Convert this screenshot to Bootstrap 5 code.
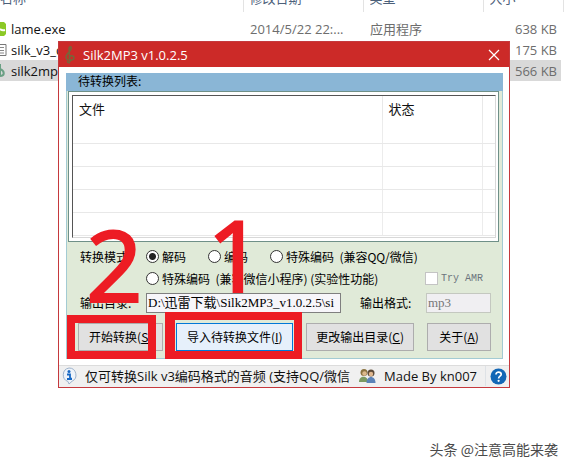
<!DOCTYPE html>
<html lang="zh-CN">
<head>
<meta charset="utf-8">
<meta name="viewport" content="width=device-width, initial-scale=1">
<title>Silk2MP3 v1.0.2.5</title>
<link href="https://cdn.jsdelivr.net/npm/bootstrap@5.3.0/dist/css/bootstrap.min.css" rel="stylesheet">
<style>
body { font-family: "Open Sans", "Noto Sans CJK SC", sans-serif; font-size: 13px; line-height: 20px; color: #111; background: #fff; min-height: 100vh; overflow: hidden; }
.files { table-layout: fixed; width: calc(100% - 6px); color: #6d6d6d; white-space: nowrap; }
.files th { padding: 0 6px; font-weight: 400; color: #4c607a; border-right: 1px solid #e3e3e3; }
.files thead div { height: 12px; overflow: hidden; display: flex; align-items: flex-end; }
.files thead span { margin-bottom: 4px; }
.files td { height: 21px; padding: 0 7px; overflow: hidden; }
.files td:first-child { color: #111; padding-left: 0; }
.files td:last-child { border-right: 4px solid #fff; padding-right: 4px; text-align: right; }
.files .spacer-row td { height: 6px; }
.files .picked td { background: #d9d9d9; }
.files svg { margin-right: 4px; margin-top: -2px; }
.c-mid { width: 120px; }
.c-size { width: 80px; }
.dialog-win { left: 58px; right: 61px; top: 41px; border: 1px solid #c5393d; background: #fff; }
.title-strip { background: #cc2a28; color: #fff; height: 25px; padding: 0 9px 0 6px; }
.title-strip button { background: none; border: 0; padding: 0; line-height: 0; }
.tool-panel { margin: 6px 6px 6px 7px; border: 1px solid #a3cbd3; border-top: 0; background: #e0ead8; padding-bottom: 7px; }
.panel-name { background: #8ab6d6; height: 18px; line-height: 16px; padding-left: 12px; margin: 0 -1px; }
.sim { font-family: "Noto Sans CJK SC", sans-serif; font-size: 12px; color: #000; }
.list-outer { border: 1px solid #6f9088; background: #fff; margin: 0 3px 0 1px; padding: 3px 2px 3px 3px; }
.list-inner { border: 1px solid #d8d8d8; border-top-color: #555; border-left-color: #555; padding-bottom: 1px; }
.list-inner table { table-layout: fixed; width: 100%; }
.list-inner th { height: 24px; font-weight: 400; padding: 1px 6px 0; border-right: 1px solid #e8e8e8; }
.list-inner td { height: 23px; border-right: 1px solid #ececec; border-bottom: 1px solid #e8e8e8; }
.list-inner th:last-child, .list-inner td:last-child { border-right: 0; }
.opt-area { padding: 4px 11px 0 13px; }
.opt-line { height: 22px; white-space: nowrap; }
.modes { gap: 22px; }
.lead-label { width: 66px; flex: none; white-space: nowrap; }
.opt-line input { appearance: none; width: 13px; height: 13px; border: 1px solid #333; background: #fff; margin: 0 3px 0 0; flex: none; }
.opt-line input[type=radio] { border-radius: 50%; }
.opt-line input[type=radio]:checked { background: radial-gradient(circle, #222 0 3px, #fff 4px); }
.opt-line input[type=checkbox] { border-color: #c4c4c4; margin-right: 3px; }
.half { font-family: "Liberation Mono", monospace; font-size: 10px; }
.path-line { margin-top: 3px; }
.box-text { height: 20px; border: 1px solid #7f7f7f; background: #f7f6fa; padding: 0 1px; min-width: 0; border-radius: 0; font-family: "Liberation Serif", "Noto Sans CJK SC", serif; font-size: 13px; color: #000; }
.box-text:disabled { border-color: #c4c8c0; background: #f0eff2; color: #777; }
.fmt { width: 65px; }
.fmt-label { margin-left: 19px; }
.cmds { padding: 0 11px; gap: 13px; margin-top: 10px; }
.cmds button { height: 28px; padding: 0; min-width: 0; border: 1px solid #adadad; background: #e1e1e1; white-space: nowrap; overflow: hidden; }
.cmds .focused { border: 1px solid #0078d7; background: #e6f0fb; }
.w-a { flex: 85 1 0; } .w-b { flex: 117 1 0; } .w-c { flex: 108 1 0; } .w-d { flex: 63 1 0; }
.status-strip { background: #f0f0f0; border-top: 1px solid #dcdcdc; height: 22px; white-space: nowrap; padding: 0 2px 0 1px; }
.status-strip svg { flex: none; }
.status-msg { min-width: 0; padding-left: 7px; overflow: hidden; }
.mark-digit { color: #ed1c24; font-family: "Noto Sans", sans-serif; font-size: 99px; line-height: 100px; -webkit-text-stroke: 2px #ed1c24; }
.digit-two { left: 27px; top: 172px; }
.digit-one { left: 148px; top: 162px; }
.mark-frame { border: 8px solid #ed1c24; pointer-events: none; }
.frame-two { left: 8px; top: 273px; width: 89px; height: 44px; }
.frame-one { left: 106px; top: 270px; width: 137px; height: 47px; border-left-width: 10px; }
.credit { right: 13px; bottom: 11px; font-family: "Noto Sans CJK SC", sans-serif; font-size: 14px; color: #4a4a4a; }
</style>
</head>
<body class="position-relative">
<table class="files">
  <colgroup><col><col class="c-mid"><col class="c-mid"><col class="c-size"></colgroup>
  <thead><tr>
    <th class="ps-0"><div><span>名称</span></div></th><th><div><span>修改日期</span></div></th><th><div><span>类型</span></div></th><th><div><span>大小</span></div></th>
  </tr></thead>
  <tbody>
    <tr class="spacer-row"><td colspan="4"></td></tr>
    <tr><td><svg width="7" height="16" viewBox="0 0 7 16"><path d="M0 1h4l2 2v10l-2 2H0z" fill="#8cc926"/><path d="M0 8q2 2 5 1" stroke="#fff" fill="none" stroke-width="2"/></svg>lame.exe</td><td>2014/5/22 22:...</td><td>应用程序</td><td>638 KB</td></tr>
    <tr><td><svg width="7" height="16" viewBox="0 0 7 16"><path d="M0 2.500h6v11H0" fill="#fff" stroke="#777"/><path d="M0 5.500h4M0 8.500h4M0 11h4" stroke="#888"/></svg>silk_v3_d</td><td></td><td></td><td>175 KB</td></tr>
    <tr class="picked"><td><svg width="7" height="16" viewBox="0 0 7 16"><path d="M0 1v13M0 6c5 2 5 7 0 7" fill="none" stroke="#6aa084" stroke-width="2"/></svg>silk2mp3</td><td></td><td></td><td>566 KB</td></tr>
  </tbody>
</table>

<main class="dialog-win position-absolute">
  <header class="title-strip d-flex align-items-center">
    <svg width="10" height="18" viewBox="0 0 10 18"><path d="M5 16.500c-2 1-3-1-2-1.500M5 16 4 3c0-3 3-3 2 0-1 3-5 5-5 8 0 4 8 4 8 1 0-3-5-3-5 0" fill="none" stroke="#75673a" stroke-width="1.500"/></svg>
    <span class="ms-2">Silk2MP3 v1.0.2.5</span>
    <button class="ms-auto" type="button" aria-label="关闭"><svg width="12" height="12" viewBox="0 0 12 12"><path d="m1 1 10 10M11 1 1 11" stroke="#fff" stroke-width="1.200"/></svg></button>
  </header>

  <section class="tool-panel">
    <div class="panel-name sim">待转换列表:</div>
    <div class="list-outer"><div class="list-inner">
      <table>
        <colgroup><col><col style="width:100px"><col style="width:13px"></colgroup>
        <thead><tr><th>文件</th><th>状态</th><th></th></tr></thead>
        <tbody>
          <tr><td></td><td></td><td></td></tr><tr><td></td><td></td><td></td></tr><tr><td></td><td></td><td></td></tr><tr><td></td><td></td><td></td></tr><tr><td></td><td></td><td></td></tr>
        </tbody>
      </table>
    </div></div>
    <form class="sim">
      <div class="opt-area">
        <div class="opt-line d-flex align-items-center">
          <span class="lead-label">转换模式:</span>
          <div class="modes d-flex">
            <label class="d-flex align-items-center"><input type="radio" name="mode" checked>解码</label>
            <label class="d-flex align-items-center"><input type="radio" name="mode">编码</label>
            <label class="d-flex align-items-center"><input type="radio" name="mode">特殊编码&nbsp; (兼容QQ/微信)</label>
          </div>
        </div>
        <div class="opt-line d-flex align-items-center">
          <span class="lead-label"></span>
          <label class="d-flex align-items-center"><input type="radio" name="mode">特殊编码&nbsp; (兼容微信小程序) (实验性功能)</label>
          <label class="d-flex align-items-center ms-auto text-secondary pe-2"><input type="checkbox" disabled><span class="half">Try AMR</span></label>
        </div>
        <div class="path-line d-flex align-items-center">
          <label class="lead-label" for="outdir">输出目录:</label>
          <input class="box-text flex-fill" id="outdir" type="text" value="D:\迅雷下载\Silk2MP3_v1.0.2.5\si">
          <label class="lead-label fmt-label" for="fmt">输出格式:</label>
          <input class="box-text fmt" id="fmt" type="text" value="mp3" disabled>
        </div>
      </div>
      <div class="cmds d-flex">
        <button class="w-a" type="button">开始转换(<u>S</u>)</button>
        <button class="w-b focused" type="button">导入待转换文件(<u>I</u>)</button>
        <button class="w-c" type="button">更改输出目录(<u>C</u>)</button>
        <button class="w-d" type="button">关于(<u>A</u>)</button>
      </div>
    </form>
  </section>

  <footer class="status-strip d-flex align-items-center">
    <svg width="18" height="18" viewBox="0 0 18 18"><path d="M9 1a7 7 0 0 1 3 13.300L9 17l-1-2.500A7 7 0 0 1 9 1z" fill="#eef3fa" stroke="#9eb3cc"/><circle cx="9" cy="4.500" r="1.500" fill="#1768c4"/><path d="M7 7.500h3v4h1.500M7 12h5" stroke="#1768c4" stroke-width="1.800" fill="none"/></svg>
    <span class="status-msg flex-fill">仅可转换Silk v3编码格式的音频 (支持QQ/微信</span>
    <svg class="ms-1" width="17" height="16" viewBox="0 0 17 16"><circle cx="5" cy="4.500" r="3.500" fill="#8b7340"/><circle cx="5.500" cy="5.500" r="2.200" fill="#dcb98c"/><path d="M0 14c0-7 9-7 9 0z" fill="#7b9a62"/><circle cx="12" cy="5" r="3.500" fill="#5c4a38"/><circle cx="12" cy="6" r="2.200" fill="#e0b890"/><path d="M7.500 15c0-8 9-8 9 0z" fill="#5b83b8"/></svg>
    <span class="ms-2 pe-2 border-end">Made By kn007</span>
    <svg class="ms-1" width="17" height="17" viewBox="0 0 17 17"><circle cx="8.500" cy="8.500" r="8" fill="#1267b6"/><path d="M6 6.500c0-3.500 5.500-3 5.200 0C11 8.300 8.600 8.200 8.600 10.500" fill="none" stroke="#fff" stroke-width="1.700"/><circle cx="8.600" cy="12.800" r="1.100" fill="#fff"/></svg>
  </footer>

  <div class="mark-digit digit-two position-absolute">2</div>
  <div class="mark-digit digit-one position-absolute">1</div>
  <div class="mark-frame frame-two position-absolute"></div>
  <div class="mark-frame frame-one position-absolute"></div>
</main>
<div class="credit position-absolute">头条 @注意高能来袭</div>
<script src="https://cdn.jsdelivr.net/npm/bootstrap@5.3.0/dist/js/bootstrap.bundle.min.js"></script>
</body>
</html>
